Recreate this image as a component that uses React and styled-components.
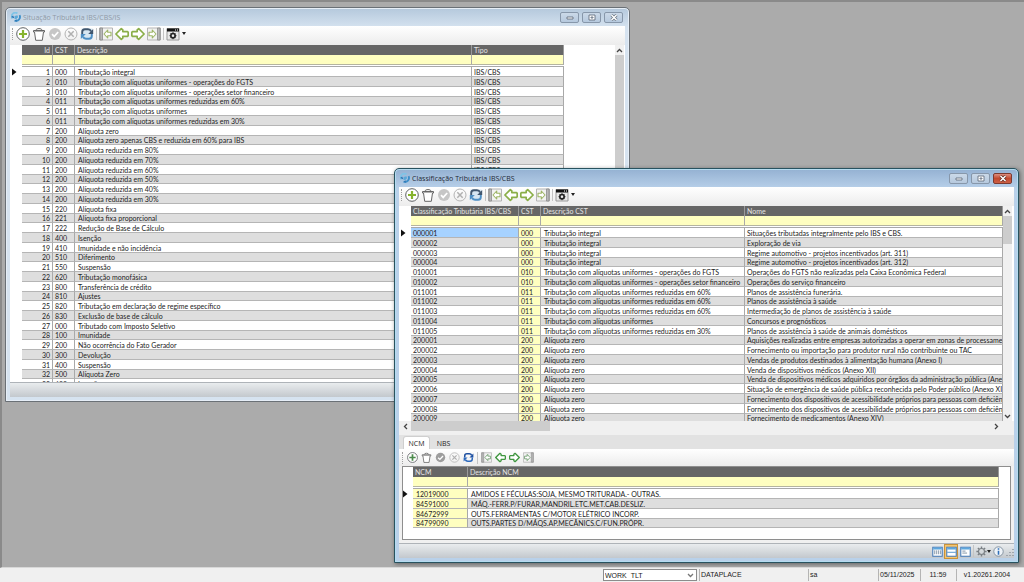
import React from 'react';
import styled, { createGlobalStyle, css } from 'styled-components';

const GlobalStyles = createGlobalStyle`
  * {
    box-sizing: border-box;
  }

  html, body, #root {
    height: 100%;
    margin: 0;
  }

  body {
    overflow: hidden;
    background: #ababab;
    color: #222;
    font-family: Lato, "Liberation Sans", sans-serif;
    font-size: 7px;
  }

  button, input, select {
    font: inherit;
    color: inherit;
  }
`;

/* ---------- shell ---------- */

const Shell = styled.div`
  display: flex;
  flex-direction: column;
  height: 100%;
`;

const Desktop = styled.main`
  position: relative;
  flex: 1;
  overflow: hidden;
  background: #ababab;
  border-top: 2px solid #8a8a8a;
  border-left: 2px solid #8a8a8a;
  border-bottom: 1px solid #d8d8d8;
`;

const AppStatus = styled.footer`
  display: flex;
  justify-content: flex-end;
  gap: 2px;
  height: 14px;
  padding: 1px 8px 1px 0;
  background: #f0f0f0;
  font-family: "Liberation Sans", Arial, sans-serif;
`;

const CompanyField = styled.label`
  display: flex;
  align-items: center;
  width: 94px;
  padding-right: 2px;
  background: #fff;
  border: 1px solid #8c8c8c;
`;

const Company = styled.select`
  flex: 1;
  height: 10px;
  padding: 0 1px;
  border: 0;
  outline: 0;
  appearance: none;
  background: transparent;
`;

const StatusCell = styled.span`
  width: ${({ $width }) => $width}px;
  padding-left: 1px;
  line-height: 12px;
  border-left: 1px solid #b4b4b4;
  text-align: ${({ $align }) => $align || 'left'};
`;

/* ---------- window ---------- */

const Window = styled.section`
  position: absolute;
  left: ${({ $left }) => $left}px;
  top: ${({ $top }) => $top}px;
  display: flex;
  flex-direction: column;
  width: 625px;
  height: 395px;
  padding: 0 4px 4px;
  border: 1px solid #6a7076;
  border-radius: 5px 5px 0 0;
  background: linear-gradient(#b4c8dc, #d6e3f0 20px);
  box-shadow: inset 0 0 0 1px #e6eef7;
  ${({ $active }) =>
    $active &&
    css`
      border-color: #28525f;
      background: linear-gradient(#94b1d2, #b9d1ea 20px);
      box-shadow: inset 0 0 0 1px #b5dcf0, 1px 1px 4px rgba(0, 0, 0, 0.45);
    `}
`;

const TitleBar = styled.header`
  display: flex;
  align-items: center;
  gap: 2px;
  height: 18px;
  padding-left: 1px;
  color: ${({ $active }) => ($active ? '#1d2733' : '#8f99a5')};
`;

const Title = styled.h1`
  flex: 1;
  margin: 0;
  font: 400 7px "Open Sans", "Noto Sans", sans-serif;
`;

const TitleButton = styled.button`
  display: flex;
  align-items: center;
  justify-content: center;
  width: 19px;
  height: 11px;
  margin-right: 2px;
  padding: 0;
  border: 1px solid #8797aa;
  border-radius: 2px;
  background: ${({ $close }) =>
    $close ? 'linear-gradient(#dd8f80, #c2492f 50%, #cc6046)' : 'linear-gradient(#cbd9e8, #b6c9de)'};
  ${({ $close }) => $close && 'border-color: #7c3a30;'}
  & + & {
    margin-left: -1px;
  }
`;

const Client = styled.div`
  display: flex;
  flex: 1;
  flex-direction: column;
  min-height: 0;
  background: #fff;
`;

const Toolbar = styled.div`
  display: flex;
  flex: none;
  align-items: center;
  gap: ${({ $small }) => ($small ? 3 : 2)}px;
  height: ${({ $small }) => ($small ? 17 : 19)}px;
  padding: ${({ $small }) => ($small ? '0 0 0 3px' : '0 0 4px 2px')};
  background: linear-gradient(#fff, #ececec);
`;

const Grip = styled.span`
  width: 2px;
  height: 12px;
  border-left: 1px dotted #a0a0a0;
`;

const Divider = styled.span`
  width: 1px;
  height: 12px;
  background: #c4c4c4;
`;

const ToolButton = styled.button`
  display: flex;
  align-items: center;
  justify-content: center;
  padding: 0;
  border: 0;
  background: none;
`;

const WindowStatus = styled.div`
  display: flex;
  flex: none;
  align-items: center;
  justify-content: flex-end;
  gap: 2px;
  height: 15px;
  border-top: 1px solid #aeb3b8;
  background: linear-gradient(#e9ecee, #c3c8cd);
`;

const ViewButton = styled(ToolButton)`
  width: 12px;
  height: 13px;
  ${({ $on }) => $on && 'background: #f5c56f; box-shadow: 0 0 0 1px #c9923a;'}
`;

/* ---------- grid ---------- */

const GridPane = styled.div`
  display: flex;
  flex: 1;
  min-height: 0;
`;

const Gutter = styled.div`
  display: flex;
  flex: none;
  align-items: flex-start;
  width: ${({ $width }) => $width}px;
  padding-top: 23px;
  padding-left: ${({ $inset }) => $inset || 0}px;
`;

const Viewport = styled.div`
  flex: 1;
  min-width: 0;
  overflow: hidden;
`;

const Table = styled.table`
  width: ${({ $width }) => $width || '100%'};
  table-layout: fixed;
  border-collapse: separate;
  border-spacing: 0;
  white-space: nowrap;
  line-height: 8px;

  th, td {
    padding: 0 2px;
    text-align: left;
    border-right: 1px solid #a9a9a9;
  }

  th:last-child, td:last-child {
    overflow: hidden;
  }
`;

const HeadRow = styled.tr`
  height: 10px;
  background: #666;
  color: #e4e4e4;
  th {
    font-weight: 400;
    border-right-color: #9a9a9a;
  }
`;

const FilterRow = styled.tr`
  height: 10px;
  background: #ffffc0;
  && td {
    padding: 0;
    border-bottom: 1px solid #b5b5a0;
  }
`;

const FilterInput = styled.input`
  display: block;
  width: 100%;
  height: 9px;
  padding: 0 2px;
  border: 0;
  background: transparent;
`;

const SpacerRow = styled.tr`
  height: 2px;
  line-height: 1px;
  && td {
    height: 2px;
    border-right: 0;
    border-bottom: 1px solid #a9a9a9;
  }
`;

/* three rows of 10px and one of 9px */
const Row = styled.tr`
  height: 10px;
  background: #fff;
  &:nth-child(even) {
    background: #dedede;
  }
  &:nth-child(4n) {
    height: 9px;
  }
  && td {
    border-bottom: 1px solid #b5b5b5;
  }
`;

const Cell = styled.td`
  && {
    text-align: ${({ $align }) => $align || 'left'};
    padding-left: ${({ $indent }) => $indent || 2}px;
  }
  background: ${({ $tone }) => ({ key: '#ffffc0', selected: '#a6d2ff' }[$tone] || 'transparent')};
`;

const VScroll = styled.div`
  display: flex;
  flex: none;
  flex-direction: column;
  align-items: center;
  width: 9px;
  margin-right: ${({ $gap }) => $gap}px;
  background: #f0f0f0;
`;

const VThumb = styled.div`
  width: 100%;
  background: #cdcdcd;
  ${({ $full }) => ($full ? 'flex: 1;' : 'height: 28px; margin-bottom: auto;')}
`;

const HScroll = styled.div`
  display: flex;
  flex: none;
  align-items: center;
  height: 14px;
  padding: 0 12px 4px 0;
  background: #f0f0f0;
`;

const HThumb = styled.div`
  width: 23%;
  height: 10px;
  margin-right: auto;
  background: #cdcdcd;
`;

const ScrollButton = styled(ToolButton)`
  flex: none;
  width: ${({ $wide }) => ($wide ? 12 : 9)}px;
  height: 10px;
`;

const Tabs = styled.div`
  display: flex;
  flex: none;
  height: 14px;
  padding: 1px 4px 0;
  background: #e2e2e2;
`;

const Tab = styled.button`
  width: 27px;
  padding: 0;
  border: 1px solid ${({ $on }) => ($on ? '#cfcfcf' : 'transparent')};
  border-bottom: 0;
  border-radius: 3px 3px 0 0;
  background: ${({ $on }) => ($on ? '#fff' : 'transparent')};
  font: 400 7px "Open Sans", "Noto Sans", sans-serif;
`;

const SubPanel = styled.div`
  flex: none;
  padding: 0 3px 3px;
  background: #f0f0f0;
`;

const SubGrid = styled.div`
  display: flex;
  height: 74px;
  padding-right: 11px;
  border: 1px solid #8e8e8e;
  background: #fff;
`;

/* ---------- icons ---------- */

const Svg = ({ size = 14, children, ...rest }) => (
  <svg width={size} height={size} viewBox="0 0 14 14" fill="none" aria-hidden="true" {...rest}>
    {children}
  </svg>
);

const LogoIcon = () => (
  <Svg size={10}>
    <path d="M2 9A5 5 0 0 1 9 2" stroke="#7fc4e6" strokeWidth="2.4" />
    <path d="M12 4.500A5.500 5.500 0 0 1 5 12" stroke="#3d8fc9" strokeWidth="2.600" />
    <path d="M0 7l3-2 2 4zM5 12l3-2v4z" fill="#2f77b5" />
    <path d="M5 5.500l4-1 1 3-3 2.500-2-1z" fill="#5aa9d8" />
  </Svg>
);

const AddIcon = ({ size, small }) => (
  <Svg size={size}>
    <circle cx="7" cy="7" r="6.300" fill="#fff" stroke="#5d6063" strokeWidth="1" />
    <path d="M7 3v8M3 7h8" stroke={small ? '#4c8a4c' : '#86b32d'} strokeWidth="2.200" />
  </Svg>
);

const TrashIcon = ({ size }) => (
  <Svg size={size}>
    <path d="M1.500 3.500h11v1.500h-11z" fill="#fff" stroke="#666" />
    <path d="M4 3.300C4 1 10 1 10 3.300" stroke="#666" />
    <path d="M2.500 5l1.200 8.300h6.600L11.500 5" fill="#fff" stroke="#666" />
  </Svg>
);

const ConfirmIcon = ({ size, small }) => (
  <Svg size={size}>
    <circle cx="7" cy="7" r="6" fill={small ? '#9d9d9d' : '#c6c6c6'} />
    <path d="M4 7.200l2.200 2.200L10.200 5" stroke="#fff" strokeWidth="1.700" />
  </Svg>
);

const CancelIcon = ({ size }) => (
  <Svg size={size}>
    <circle cx="7" cy="7" r="6" stroke="#b4b4b4" />
    <path d="M4.300 4.300l5.400 5.400M9.700 4.300L4.300 9.700" stroke="#b0b0b0" strokeWidth="1.500" />
  </Svg>
);

const RefreshIcon = ({ size, small }) => {
  const dark = small ? '#1d4fa0' : '#40566e';
  const light = small ? '#2c69bd' : '#4f8fc4';
  return (
    <Svg size={size}>
      {!small && <path d="M1.500 1.500h11v11h-11z" fill="#d6e6f2" />}
      <path d="M2.200 7V5C2.200 3.200 3.200 2.300 5 2.300h3c1.500 0 2.500.700 3 2" stroke={dark} strokeWidth="1.900" />
      <path d="M13.200 2v5H8.200z" fill={dark} />
      <path d="M11.800 7v2c0 1.800-1 2.700-2.800 2.700H6c-1.500 0-2.500-.700-3-2" stroke={light} strokeWidth="1.900" />
      <path d="M.800 12V7h5z" fill={light} />
    </Svg>
  );
};

const EdgeIcon = ({ size, small, flip }) => (
  <Svg size={size} style={flip ? { transform: 'scaleX(-1)' } : undefined}>
    <path d="M.500 1h13v12H.500z" fill="#f2f2f2" stroke="#b4b4b4" />
    <path d="M1 1h2.500v12H1z" fill="#b9b9b9" stroke="#8c8c8c" strokeWidth=".800" />
    <path
      d="M5 7l3.700-4v2.300h3.300v3.400H8.700V11z"
      fill="#fff"
      stroke={small ? '#6d9b6d' : '#9db565'}
      strokeWidth="1.100"
      strokeLinejoin="round"
    />
  </Svg>
);

const ArrowIcon = ({ size, small, flip }) => (
  <Svg size={size} style={flip ? { transform: 'scaleX(-1)' } : undefined}>
    <path
      d="M.900 7l5.400-5.300 1.500 1.300v1.600h4.700l.700.800v3.200l-.700.800H7.800V11l-1.500 1.300z"
      fill="#fff"
      stroke={small ? '#3f963f' : '#8aae48'}
      strokeWidth="1.700"
      strokeLinejoin="round"
    />
  </Svg>
);

const ConfigIcon = () => (
  <Svg>
    <path d="M1 1.500h12v11.500H1z" fill="#e8e8e8" stroke="#999" />
    <path d="M1 1.500h12v3H1z" fill="#111" />
    <path d="M9 3h1M11 3h1" stroke="#fff" />
    <circle cx="7" cy="8.700" r="2.200" stroke="#222" strokeWidth="1.600" />
    <path d="M7 5.200v7M3.500 8.700h7M4.600 6.300l4.800 4.800M9.400 6.300l-4.800 4.800" stroke="#222" strokeWidth=".900" />
    <circle cx="7" cy="8.700" r="1.200" fill="#eee" />
  </Svg>
);

const Caret = () => (
  <svg width="4" height="3" viewBox="0 0 4 3" aria-hidden="true">
    <path d="M0 0h4L2 3z" fill="#222" />
  </svg>
);

const Marker = () => (
  <svg width="5" height="8" viewBox="0 0 5 8" aria-hidden="true">
    <path d="M0 0.500L4.500 4 0 7.500z" fill="#111" />
  </svg>
);

const Chevron = ({ turn, color = '#444' }) => (
  <svg width="7" height="7" viewBox="0 0 7 7" fill="none" aria-hidden="true">
    <path d="M1 5l2.500-2.500L6 5" stroke={color} strokeWidth="1.300" transform={`rotate(${turn || 0} 3.500 3.500)`} />
  </svg>
);

const VIEW_LINES = {
  columns: 'M3.500 5.500v5M6 5.500v5M8.500 5.500v5M11 5.500v5',
  split: 'M1.500 8h11',
  form: 'M3 6.500h4M3 9h6',
};

const ViewIcon = ({ kind }) => (
  <Svg size={11}>
    <path d="M1 1.500h12v11.500H1z" fill="#fff" stroke="#3f76b5" strokeWidth="1.300" />
    <path d="M1.500 2h11v2.500h-11z" fill="#5da7de" />
    <path d={VIEW_LINES[kind]} stroke={kind === 'split' ? '#4c93d0' : '#7d8fa3'} strokeWidth="1.200" />
  </Svg>
);

const GearIcon = () => (
  <Svg size={11}>
    <circle cx="7" cy="7" r="3.800" stroke="#7b8085" strokeWidth="1.400" />
    <path
      d="M7 .500v2.400M7 11.100v2.400M.500 7h2.400M11.100 7h2.400M2.400 2.400l1.700 1.700M9.900 9.900l1.700 1.700M11.600 2.400L9.900 4.100M4.100 9.900l-1.700 1.700"
      stroke="#7b8085"
      strokeWidth="1.800"
    />
  </Svg>
);

const InfoIcon = () => (
  <Svg size={11}>
    <circle cx="7" cy="7" r="6" fill="#eef3f8" stroke="#6f7f90" />
    <path d="M7 6v5M7 3v1.800" stroke="#2f6fb8" strokeWidth="2" />
  </Svg>
);

const SizeGrip = () => (
  <svg width="8" height="10" viewBox="0 0 8 10" aria-hidden="true">
    <path d="M7 3v1M7 6v1M4 6v1M7 9v1M4 9v1M1 9v1" stroke="#8f979f" strokeWidth="1.500" />
  </svg>
);

const TITLE_GLYPHS = {
  Minimizar: 'M2 3h6v2H2z',
  Restaurar: 'M2 1h6v5H2zM4 3h2v1H4z',
};

const TitleGlyph = ({ name, active }) => (
  <svg width="10" height="7" viewBox="0 0 10 7" fill="none" aria-hidden="true">
    {name === 'Fechar' ? (
      <>
        <path d="M2.500 1l5 5M7.500 1l-5 5" stroke={active ? '#5c2a22' : '#6a7683'} strokeWidth="3" />
        <path d="M2.500 1l5 5M7.500 1l-5 5" stroke="#fff" strokeWidth="1.500" />
      </>
    ) : (
      <path d={TITLE_GLYPHS[name]} fill="#fff" stroke="#65717f" strokeWidth=".900" />
    )}
  </svg>
);

/* ---------- data ---------- */

const UNIFORM = 'Tributação com alíquotas uniformes';

const situations = [
  ['000', 'Tributação integral'],
  ['010', `${UNIFORM} - operações do FGTS`],
  ['010', `${UNIFORM} - operações setor financeiro`],
  ['011', `${UNIFORM} reduzidas em 60%`],
  ['011', UNIFORM],
  ['011', `${UNIFORM} reduzidas em 30%`],
  ['200', 'Alíquota zero'],
  ['200', 'Alíquota zero apenas CBS e reduzida em 60% para IBS'],
  ['200', 'Alíquota reduzida em 80%'],
  ['200', 'Alíquota reduzida em 70%'],
  ['200', 'Alíquota reduzida em 60%'],
  ['200', 'Alíquota reduzida em 50%'],
  ['200', 'Alíquota reduzida em 40%'],
  ['200', 'Alíquota reduzida em 30%'],
  ['220', 'Alíquota fixa'],
  ['221', 'Alíquota fixa proporcional'],
  ['222', 'Redução de Base de Cálculo'],
  ['400', 'Isenção'],
  ['410', 'Imunidade e não incidência'],
  ['510', 'Diferimento'],
  ['550', 'Suspensão'],
  ['620', 'Tributação monofásica'],
  ['800', 'Transferência de crédito'],
  ['810', 'Ajustes'],
  ['820', 'Tributação em declaração de regime específico'],
  ['830', 'Exclusão de base de cálculo'],
  ['000', 'Tributado com Imposto Seletivo'],
  ['100', 'Imunidade'],
  ['200', 'Não ocorrência do Fato Gerador'],
  ['300', 'Devolução'],
  ['400', 'Suspensão'],
  ['500', 'Alíquota Zero'],
  ['600', 'Isenção'],
].map(([cst, text], i) => [i + 1, cst, text, 'IBS/CBS']);

const classifications = [
  ['000001', '000', 'Tributação integral', 'Situações tributadas integralmente pelo IBS e CBS.'],
  ['000002', '000', 'Tributação integral', 'Exploração de via'],
  ['000003', '000', 'Tributação integral', 'Regime automotivo - projetos incentivados (art. 311)'],
  ['000004', '000', 'Tributação integral', 'Regime automotivo - projetos incentivados (art. 312)'],
  ['010001', '010', `${UNIFORM} - operações do FGTS`, 'Operações do FGTS não realizadas pela Caixa Econômica Federal'],
  ['010002', '010', `${UNIFORM} - operações setor financeiro`, 'Operações do serviço financeiro'],
  ['011001', '011', `${UNIFORM} reduzidas em 60%`, 'Planos de assistência funerária.'],
  ['011002', '011', `${UNIFORM} reduzidas em 60%`, 'Planos de assistência à saúde'],
  ['011003', '011', `${UNIFORM} reduzidas em 60%`, 'Intermediação de planos de assistência à saúde'],
  ['011004', '011', UNIFORM, 'Concursos e prognósticos'],
  ['011005', '011', `${UNIFORM} reduzidas em 30%`, 'Planos de assistência à saúde de animais domésticos'],
  ['200001', '200', 'Alíquota zero', 'Aquisições realizadas entre empresas autorizadas a operar em zonas de processamento de exportação'],
  ['200002', '200', 'Alíquota zero', 'Fornecimento ou importação para produtor rural não contribuinte ou TAC'],
  ['200003', '200', 'Alíquota zero', 'Vendas de produtos destinados à alimentação humana (Anexo I)'],
  ['200004', '200', 'Alíquota zero', 'Venda de dispositivos médicos (Anexo XII)'],
  ['200005', '200', 'Alíquota zero', 'Venda de dispositivos médicos adquiridos por órgãos da administração pública (Anexo IV)'],
  ['200006', '200', 'Alíquota zero', 'Situação de emergência de saúde pública reconhecida pelo Poder público (Anexo XII)'],
  ['200007', '200', 'Alíquota zero', 'Fornecimento dos dispositivos de acessibilidade próprios para pessoas com deficiência (Anexo XIII)'],
  ['200008', '200', 'Alíquota zero', 'Fornecimento dos dispositivos de acessibilidade próprios para pessoas com deficiência adquiridos'],
  ['200009', '200', 'Alíquota zero', 'Fornecimento de medicamentos (Anexo XIV)'],
];

const ncms = [
  ['12019000', 'AMIDOS E FÉCULAS:SOJA, MESMO TRITURADA.-  OUTRAS.'],
  ['84591000', 'MÁQ.-FERR.P/FURAR,MANDRIL.ETC.MET.CAB.DESLIZ.'],
  ['84672999', 'OUTS.FERRAMENTAS C/MOTOR ELÉTRICO INCORP.'],
  ['84799090', 'OUTS.PARTES D/MÁQS.AP.MECÂNICS.C/FUN.PRÓPR.'],
];

/* ---------- parts ---------- */

const DataGrid = ({ columns, rows, width, selected }) => (
  <Table $width={width}>
    <colgroup>
      {columns.map(c => (
        <col key={c.label} style={{ width: c.width }} />
      ))}
    </colgroup>
    <thead>
      <HeadRow>
        {columns.map(c => (
          <Cell as="th" scope="col" key={c.label} $align={c.align}>
            {c.label}
          </Cell>
        ))}
      </HeadRow>
      <FilterRow>
        {columns.map(c => (
          <td key={c.label}>
            <FilterInput aria-label={`Filtrar ${c.label}`} />
          </td>
        ))}
      </FilterRow>
      <SpacerRow>
        <td colSpan={columns.length} />
      </SpacerRow>
    </thead>
    <tbody>
      {rows.map((row, r) => (
        <Row key={row[0]}>
          {columns.map((c, i) => (
            <Cell
              key={c.label}
              $align={c.align}
              $indent={c.indent}
              $tone={selected && r === 0 && i === 0 ? 'selected' : c.tone}
            >
              {row[i]}
            </Cell>
          ))}
        </Row>
      ))}
    </tbody>
  </Table>
);

const GridTools = ({ small }) => {
  const size = small ? 11 : 14;
  const tool = (label, Icon, extra) => (
    <ToolButton aria-label={label}>
      <Icon size={size} small={small} {...extra} />
    </ToolButton>
  );
  return (
    <Toolbar $small={small}>
      <Grip />
      {tool('Incluir', AddIcon)}
      {tool('Excluir', TrashIcon)}
      {tool('Confirmar', ConfirmIcon)}
      {tool('Cancelar', CancelIcon)}
      {tool('Atualizar', RefreshIcon)}
      <Divider />
      {tool('Primeiro', EdgeIcon)}
      {tool('Anterior', ArrowIcon)}
      {tool('Próximo', ArrowIcon, { flip: true })}
      {tool('Último', EdgeIcon, { flip: true })}
      {!small && (
        <>
          <Divider />
          {tool('Configurar', ConfigIcon)}
          <ToolButton aria-label="Mais opções">
            <Caret />
          </ToolButton>
        </>
      )}
    </Toolbar>
  );
};

const MdiWindow = ({ title, left, top, active, children }) => (
  <Window $left={left} $top={top} $active={active}>
    <TitleBar $active={active}>
      <LogoIcon />
      <Title>{title}</Title>
      {['Minimizar', 'Restaurar', 'Fechar'].map(name => (
        <TitleButton key={name} aria-label={name} $close={active && name === 'Fechar'}>
          <TitleGlyph name={name} active={active} />
        </TitleButton>
      ))}
    </TitleBar>
    <Client>
      <GridTools />
      {children}
    </Client>
  </Window>
);

const App = () => (
  <Shell>
    <GlobalStyles />
    <Desktop>
      <MdiWindow title="Situação Tributária IBS/CBS/IS" left={3} top={5}>
        <GridPane>
          <Gutter $width={12} $inset={2}>
            <Marker />
          </Gutter>
          <Viewport>
            <DataGrid
              width="542px"
              rows={situations}
              columns={[
                { label: 'Id', width: 31, align: 'right' },
                { label: 'CST', width: 22 },
                { label: 'Descrição', indent: 3 },
                { label: 'Tipo', width: 92 },
              ]}
            />
          </Viewport>
          <VScroll $gap={1}>
            <ScrollButton aria-label="Rolar para cima">
              <Chevron />
            </ScrollButton>
            <VThumb $full />
          </VScroll>
        </GridPane>
        <WindowStatus />
      </MdiWindow>

      <MdiWindow title="Classificação Tributária IBS/CBS" left={392} top={166} active>
        <GridPane>
          <Gutter $width={12} $inset={2}>
            <Marker />
          </Gutter>
          <Viewport>
            <DataGrid
              rows={classifications}
              selected
              columns={[
                { label: 'Classificação Tributária IBS/CBS', width: 108 },
                { label: 'CST', width: 22, tone: 'key' },
                { label: 'Descrição CST', width: 204, indent: 3 },
                { label: 'Nome' },
              ]}
            />
          </Viewport>
          <VScroll $gap={2}>
            <ScrollButton aria-label="Rolar para cima">
              <Chevron />
            </ScrollButton>
            <VThumb />
            <ScrollButton aria-label="Rolar para baixo">
              <Chevron turn={180} />
            </ScrollButton>
          </VScroll>
        </GridPane>
        <HScroll>
          <ScrollButton $wide aria-label="Rolar para a esquerda">
            <Chevron turn={-90} />
          </ScrollButton>
          <HThumb />
          <ScrollButton $wide aria-label="Rolar para a direita">
            <Chevron turn={90} />
          </ScrollButton>
        </HScroll>
        <Tabs role="tablist">
          <Tab role="tab" aria-selected="true" $on>
            NCM
          </Tab>
          <Tab role="tab" aria-selected="false">
            NBS
          </Tab>
        </Tabs>
        <GridTools small />
        <SubPanel>
          <SubGrid>
            <Gutter $width={10}>
              <Marker />
            </Gutter>
            <Viewport>
              <DataGrid
                rows={ncms}
                columns={[
                  { label: 'NCM', width: 55, tone: 'key', indent: 3 },
                  { label: 'Descrição NCM', indent: 3 },
                ]}
              />
            </Viewport>
          </SubGrid>
        </SubPanel>
        <WindowStatus>
          <ViewButton aria-label="Grade">
            <ViewIcon kind="columns" />
          </ViewButton>
          <ViewButton aria-label="Grade e detalhe" $on>
            <ViewIcon kind="split" />
          </ViewButton>
          <ViewButton aria-label="Formulário">
            <ViewIcon kind="form" />
          </ViewButton>
          <Divider />
          <ToolButton aria-label="Preferências">
            <GearIcon />
            <Caret />
          </ToolButton>
          <ToolButton aria-label="Informações">
            <InfoIcon />
          </ToolButton>
          <SizeGrip />
        </WindowStatus>
      </MdiWindow>
    </Desktop>
    <AppStatus>
      <CompanyField>
        <Company aria-label="Empresa" defaultValue="WORK_TLT">
          <option>WORK_TLT</option>
        </Company>
        <Chevron turn={180} color="#777" />
      </CompanyField>
      <StatusCell $width={107}>DATAPLACE</StatusCell>
      <StatusCell $width={68}>sa</StatusCell>
      <StatusCell $width={40}>05/11/2025</StatusCell>
      <StatusCell $width={34} $align="center">
        11:59
      </StatusCell>
      <StatusCell $width={60} $align="center">
        v1.20261.2004
      </StatusCell>
    </AppStatus>
  </Shell>
);

export default App;
